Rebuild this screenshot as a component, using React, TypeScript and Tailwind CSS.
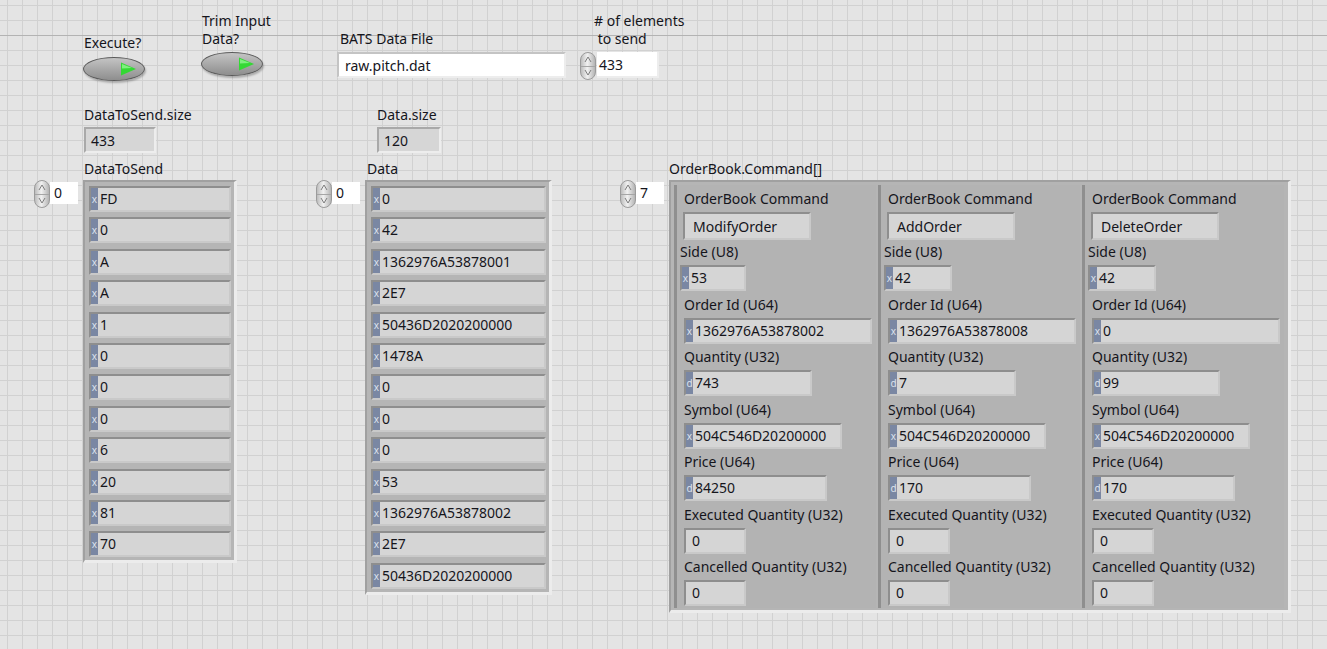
import React from "react";

const sunken =
  "border-2 border-t-[#8e8e8e] border-l-[#8e8e8e] border-b-[#c9c9c9] border-r-[#c9c9c9]";
const indicator =
  "h-[26px] border-2 border-t-[#a9a9a9] border-l-[#a9a9a9] border-b-[#ededed] border-r-[#ededed] bg-[#d6d6d6] pl-[5px] flex items-center";
const control =
  "h-[26px] border-2 border-t-[#c4c4c4] border-l-[#c4c4c4] border-b-[#ededed] border-r-[#ededed] bg-white flex items-center";
const frame =
  "bg-[#b5b5b5] border-t-2 border-l-2 border-t-[#a0a0a0] border-l-[#a0a0a0] border-r-[3px] border-b-[3px] border-r-[#ececec] border-b-[#ececec]";

const Spinner = () => (
  <div className="w-[16px] h-[28px] shrink-0 rounded-[8px] border border-[#9b9b9b] bg-[linear-gradient(to_right,#bdbdbd,#f1f1f1_45%,#b4b4b4)] flex flex-col items-center justify-between py-[3px]">
    <svg width="8" height="7" viewBox="0 0 8 7">
      <path d="M1 6 L4 1 L7 6" fill="none" stroke="#7d7d7d" strokeWidth="1" />
    </svg>
    <div className="w-[14px] h-px bg-[#a5a5a5]" />
    <svg width="8" height="7" viewBox="0 0 8 7">
      <path d="M1 1 L4 6 L7 1" fill="none" stroke="#7d7d7d" strokeWidth="1" />
    </svg>
  </div>
);

const Led = () => (
  <div className="relative w-[62px] h-[24px] rounded-[50%] border border-[#5a5a5a] bg-[linear-gradient(to_bottom,#c4c4c4,#a3a3a3_60%,#8e8e8e)] shadow-[1px_2px_2px_rgba(0,0,0,0.25)] flex items-center justify-end pr-[7px]">
    <svg width="17" height="14" viewBox="0 0 17 14">
      <polygon points="1,0.5 16,7 1,13.5" fill="#34d934" />
      <polygon points="2,2 12,6 2,6.5" fill="#7ef07e" />
    </svg>
  </div>
);

const Radix = ({ c }: { c: string }) => (
  <span className="w-[7px] self-stretch bg-[#7a87a3] text-[#dde2ec] text-[10px] leading-none flex items-center justify-center">
    {c}
  </span>
);

// label above, index spinner + box on the left, frame on the right
const ArrayControl = ({
  label,
  index,
  pad,
  children,
}: {
  label: string;
  index: string;
  pad: string;
  children: React.ReactNode;
}) => (
  <div className="flex flex-col">
    <div className={`leading-[20px] ${pad}`}>{label}</div>
    <div className="flex items-start gap-[5px] mt-px">
      <div className="flex items-start">
        <Spinner />
        <div className="mt-[2px] w-[28px] h-[22px] bg-white pl-[4px] leading-[22px]">{index}</div>
      </div>
      {children}
    </div>
  </div>
);

const ArrayList = ({ items, w }: { items: string[]; w: string }) => (
  <div className={`${frame} pl-[4px] pt-[4px] pr-[3px] pb-[3px] flex flex-col gap-[5.4px]`}>
    {items.map((t, i) => (
      <div key={i} className={`${w} h-[26px] ${sunken} bg-[#d5d5d5] flex items-center`}>
        <Radix c="x" />
        <span className="pl-[2px] leading-none">{t}</span>
      </div>
    ))}
  </div>
);

type Field = { label: string; value: string; radix?: string; w: string; tight?: boolean };

const clusters: { cmd: string; fields: Field[] }[] = [
  {
    cmd: "ModifyOrder",
    fields: [
      { label: "Side (U8)", value: "53", radix: "x", w: "w-[66px]", tight: true },
      { label: "Order Id (U64)", value: "1362976A53878002", radix: "x", w: "w-[188px]" },
      { label: "Quantity (U32)", value: "743", radix: "d", w: "w-[128px]" },
      { label: "Symbol (U64)", value: "504C546D20200000", radix: "x", w: "w-[158px]" },
      { label: "Price (U64)", value: "84250", radix: "d", w: "w-[143px]" },
      { label: "Executed Quantity (U32)", value: "0", w: "w-[62px]" },
      { label: "Cancelled Quantity (U32)", value: "0", w: "w-[62px]" },
    ],
  },
  {
    cmd: "AddOrder",
    fields: [
      { label: "Side (U8)", value: "42", radix: "x", w: "w-[68px]", tight: true },
      { label: "Order Id (U64)", value: "1362976A53878008", radix: "x", w: "w-[188px]" },
      { label: "Quantity (U32)", value: "7", radix: "d", w: "w-[128px]" },
      { label: "Symbol (U64)", value: "504C546D20200000", radix: "x", w: "w-[158px]" },
      { label: "Price (U64)", value: "170", radix: "d", w: "w-[143px]" },
      { label: "Executed Quantity (U32)", value: "0", w: "w-[62px]" },
      { label: "Cancelled Quantity (U32)", value: "0", w: "w-[62px]" },
    ],
  },
  {
    cmd: "DeleteOrder",
    fields: [
      { label: "Side (U8)", value: "42", radix: "x", w: "w-[68px]", tight: true },
      { label: "Order Id (U64)", value: "0", radix: "x", w: "w-[188px]" },
      { label: "Quantity (U32)", value: "99", radix: "d", w: "w-[128px]" },
      { label: "Symbol (U64)", value: "504C546D20200000", radix: "x", w: "w-[158px]" },
      { label: "Price (U64)", value: "170", radix: "d", w: "w-[143px]" },
      { label: "Executed Quantity (U32)", value: "0", w: "w-[62px]" },
      { label: "Cancelled Quantity (U32)", value: "0", w: "w-[62px]" },
    ],
  },
];

const Cluster = ({ cmd, fields }: { cmd: string; fields: Field[] }) => (
  <div className="w-[202px] h-full bg-[#b3b3b3] border-l-[3px] border-l-[#8f8f8f] pt-[4px] flex flex-col">
    <div className="h-[23px] leading-[20px] pl-[7px]">OrderBook Command</div>
    <div className={`ml-[6px] w-[128px] h-[28px] ${sunken} bg-[#d5d5d5] pl-[8px] flex items-center`}>{cmd}</div>
    {fields.map((f, i) => (
      <div key={i} className={`flex flex-col ${f.tight ? "pl-[3px] mt-[2px]" : "pl-[7px] mt-[3.5px]"}`}>
        <div className="h-[23px] leading-[20px]">{f.label}</div>
        <div className={`${f.w} h-[26px] ${sunken} bg-[#d5d5d5] flex items-center`}>
          {f.radix ? <Radix c={f.radix} /> : <span className="w-[4px]" />}
          <span className="pl-[2px] leading-none">{f.value}</span>
        </div>
      </div>
    ))}
  </div>
);

export default function App() {
  return (
    <div className="relative w-[1327px] h-[649px] overflow-hidden bg-[#e4e4e4] bg-[linear-gradient(to_right,#d1d1d1_1px,transparent_1px),linear-gradient(to_bottom,#d1d1d1_1px,transparent_1px)] bg-[size:15px_15px] bg-[position:7px_5px] font-['Noto_Sans',sans-serif] text-[14px] text-[#15151c]">
      <div className="absolute left-0 top-[35px] w-full h-px bg-[#b3b3b3]" />

      {/* front panel objects: each sits at its own place on the panel */}
      <div className="absolute left-[83px] top-[33px] flex flex-col gap-[4px]">
        <div className="leading-[20px] pl-px">Execute?</div>
        <Led />
      </div>

      <div className="absolute left-[201px] top-[12px] flex flex-col gap-[4px]">
        <div className="leading-[18px] pl-px">
          Trim Input
          <br />
          Data?
        </div>
        <Led />
      </div>

      <div className="absolute left-[337px] top-[29px] flex flex-col gap-[3px]">
        <div className="leading-[20px] pl-[3px]">BATS Data File</div>
        <div className={`${control} w-[229px] pl-[6px]`}>raw.pitch.dat</div>
      </div>

      <div className="absolute left-[580px] top-[12px] flex flex-col gap-[4px]">
        <div className="leading-[18px] pl-[14px] whitespace-pre">{"# of elements\n to send"}</div>
        <div className="flex items-start gap-px">
          <Spinner />
          <div className="w-[62px] h-[26px] bg-white border-r-2 border-b-2 border-[#ededed] pl-[2px] flex items-center">433</div>
        </div>
      </div>

      <div className="absolute left-[84px] top-[105px] flex flex-col gap-[2px]">
        <div className="leading-[20px]">DataToSend.size</div>
        <div className={`${indicator} w-[72px]`}>433</div>
      </div>

      <div className="absolute left-[377px] top-[105px] flex flex-col gap-[2px]">
        <div className="leading-[20px]">Data.size</div>
        <div className={`${indicator} w-[64px]`}>120</div>
      </div>

      <div className="absolute left-[34px] top-[159px]">
        <ArrayControl label="DataToSend" index="0" pad="pl-[50px]">
          <ArrayList w="w-[142px]" items={["FD", "0", "A", "A", "1", "0", "0", "0", "6", "20", "81", "70"]} />
        </ArrayControl>
      </div>

      <div className="absolute left-[316px] top-[159px]">
        <ArrayControl label="Data" index="0" pad="pl-[51px]">
          <ArrayList
            w="w-[175px]"
            items={[
              "0",
              "42",
              "1362976A53878001",
              "2E7",
              "50436D2020200000",
              "1478A",
              "0",
              "0",
              "0",
              "53",
              "1362976A53878002",
              "2E7",
              "50436D2020200000",
            ]}
          />
        </ArrayControl>
      </div>

      <div className="absolute left-[620px] top-[159px]">
        <ArrayControl label="OrderBook.Command[]" index="7" pad="pl-[49px]">
          <div className={`${frame} bg-[#a3a3a3] w-[622px] h-[433px] pl-[3px] pt-[3px] pb-[2px] flex gap-[2px]`}>
            {clusters.map((c, i) => (
              <Cluster key={i} cmd={c.cmd} fields={c.fields} />
            ))}
          </div>
        </ArrayControl>
      </div>
    </div>
  );
}
